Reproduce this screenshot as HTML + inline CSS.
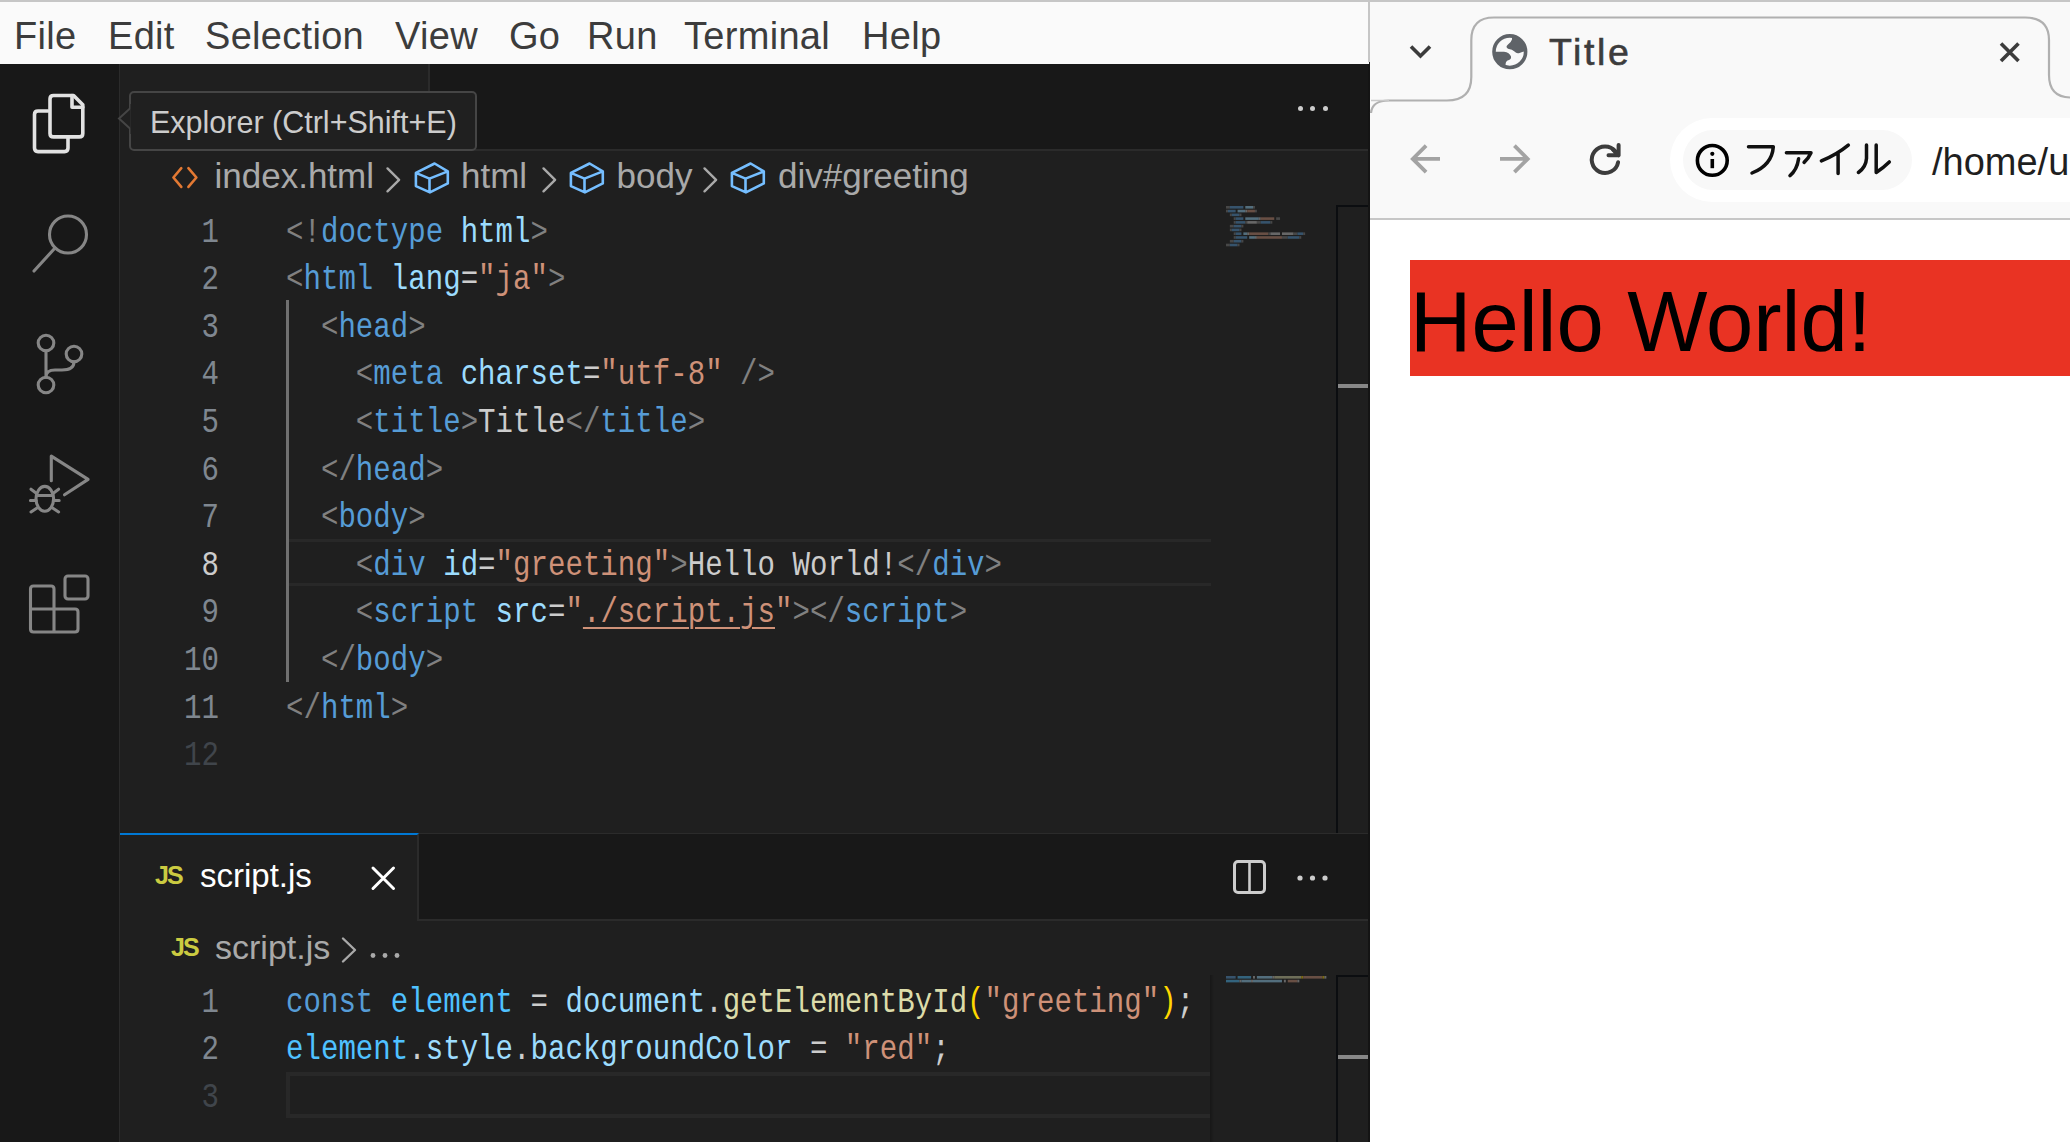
<!DOCTYPE html>
<html><head><meta charset="utf-8">
<style>
*{box-sizing:border-box}
html,body{margin:0;padding:0}
body{width:2070px;height:1142px;overflow:hidden;position:relative;background:#1f1f1f;font-family:"Liberation Sans",sans-serif}
.abs{position:absolute}
#menubar{left:0;top:0;width:1369px;height:64px;background:#fafafa;border-top:2px solid #c9c9c9}
#menubar span{position:absolute;top:14px;letter-spacing:0.3px;font-size:38px;line-height:40px;color:#3c3c3c;white-space:pre}
#activity{left:0;top:64px;width:119px;height:1078px;background:#181818}
#actborder{left:119px;top:64px;width:1px;height:1078px;background:#2b2b2b}
#g1tabs{left:120px;top:64px;width:1249px;height:87px;background:#181818;border-bottom:2px solid #2b2b2b}
#g1tab{left:120px;top:64px;width:310px;height:87px;background:#1f1f1f;border-right:2px solid #2b2b2b}
.code{position:absolute;font-family:"Liberation Mono",monospace;font-size:35px;line-height:47.6px;white-space:pre;transform-origin:0 0;transform:scaleX(0.8314)}
.ln{position:absolute;font-family:"Liberation Mono",monospace;font-size:35px;line-height:47.6px;white-space:pre;text-align:right;width:120px;color:#7f8790;transform-origin:100% 0;transform:scaleX(0.8314)}
.crumb{position:absolute;font-size:35px;line-height:40px;color:#a9a9a9;white-space:pre}
.t{color:#808080}.tn{color:#569cd6}.an{color:#9cdcfe}.s{color:#ce9178}.tx{color:#cccccc}
.kw{color:#569cd6}.vc{color:#4fc1ff}.v{color:#9cdcfe}.fn{color:#dcdcaa}.br{color:#ffd700}.p{color:#cccccc}
#browser{left:1370px;top:0;width:700px;height:1142px;background:#ffffff}
</style></head>
<body>
<!-- menubar -->
<div id="menubar" class="abs">
  <span style="left:14px">File</span>
  <span style="left:108px">Edit</span>
  <span style="left:205px">Selection</span>
  <span style="left:395px">View</span>
  <span style="left:509px">Go</span>
  <span style="left:587px">Run</span>
  <span style="left:684px">Terminal</span>
  <span style="left:862px">Help</span>
</div>

<!-- activity bar -->
<div id="activity" class="abs"></div>
<div id="actborder" class="abs"></div>


<!-- activity icons -->
<svg class="abs" style="left:0;top:0" width="120" height="700">
 <g fill="none" stroke="#e2e2e2" stroke-width="3.6" stroke-linejoin="round" stroke-linecap="round">
  <path d="M48 111 H38 Q34.5 111 34.5 114.5 V148 Q34.5 151.6 38 151.6 H64.5 Q68 151.6 68 148 V137"/>
  <path d="M53.5 95.5 H73.6 L82.8 104.7 V133.4 Q82.8 136.9 79.3 136.9 H53.5 Q50 136.9 50 133.4 V99 Q50 95.5 53.5 95.5 Z"/>
  <path d="M72 95.5 V107.3 H82.8"/>
 </g>
 <g fill="none" stroke="#868686" stroke-width="3.1" stroke-linecap="round" stroke-linejoin="round">
  <circle cx="68" cy="234.5" r="18.5"/>
  <path d="M55 248 L34 271"/>
  <circle cx="46" cy="343" r="7.8"/>
  <circle cx="74" cy="354" r="7.8"/>
  <circle cx="46" cy="385" r="7.8"/>
  <path d="M46 350.8 V377.2 M74 361.8 Q74 370 62 370 H55 Q46 370 46 377"/>
  <path d="M51.3 480.7 V456.1 L88.1 479.4 L64.5 494.8"/>
  <ellipse cx="44.8" cy="498.8" rx="8.8" ry="12.4"/>
  <path d="M37.5 495.4 H52 M36 493 L31 489.2 M53.6 493 L58.6 489.2 M36 500.6 H30.4 M53.6 500.6 H59.2 M37 508 L31 512 M52.6 508 L58.6 512" stroke-width="3"/>
  <path d="M33.5 586 H51 Q54 586 54 589 V609 H75 Q78 609 78 612 V629 Q78 632 75 632 H33.5 Q30.5 632 30.5 629 V589 Q30.5 586 33.5 586 Z M30.5 609 H54 V632"/>
  <rect x="65" y="576" width="23" height="23" rx="3"/>
 </g>
</svg>

<!-- group 1 -->
<div id="g1tabs" class="abs"></div>
<div id="g1tab" class="abs"></div>


<!-- g1 breadcrumbs -->
<svg class="abs" style="left:0;top:0" width="1369" height="210">
 <g fill="none" stroke="#e37933" stroke-width="2.6" stroke-linecap="round" stroke-linejoin="round">
  <path d="M181.3 168.2 L173.4 177.5 L181.3 186.9 M188.4 168.2 L196.4 177.5 L188.4 186.9"/>
 </g>
 <g fill="none" stroke="#a9a9a9" stroke-width="2.4" stroke-linecap="round" stroke-linejoin="round">
  <path d="M387.5 168.4 L399.1 179.8 L387.5 191.3"/>
  <path d="M543.5 168.4 L555.1 179.8 L543.5 191.3"/>
  <path d="M704.5 168.4 L716.1 179.8 L704.5 191.3"/>
 </g>
 <g id="cube" fill="none" stroke="#75beff" stroke-width="2.6" stroke-linejoin="round">
  <path d="M434.6 163.5 L447.8 171.4 L429.5 178.6 L415.9 172.9 Z M415.9 172.9 V186.1 L429.9 192.4 L447.8 183.4 V171.4 M429.5 178.6 V192.4"/>
 </g>
 <use href="#cube" x="155"/>
 <use href="#cube" x="316"/>
</svg>
<span class="crumb" style="left:214.5px;top:155.5px">index.html</span>
<span class="crumb" style="left:461px;top:155.5px">html</span>
<span class="crumb" style="left:616.5px;top:155.5px">body</span>
<span class="crumb" style="left:778px;top:155.5px">div#greeting</span>

<!-- g1 code -->
<div class="abs" style="left:289px;top:538.5px;width:922px;height:47.5px;border-top:3.5px solid #282828;border-bottom:3.5px solid #282828"></div>
<div class="abs" style="left:286px;top:300px;width:3px;height:382px;background:#707070"></div>
<div id="g1lines">
<div class="ln" style="left:99px;top:209.50px">1</div>
<div class="ln" style="left:99px;top:257.10px">2</div>
<div class="ln" style="left:99px;top:304.70px">3</div>
<div class="ln" style="left:99px;top:352.30px">4</div>
<div class="ln" style="left:99px;top:399.90px">5</div>
<div class="ln" style="left:99px;top:447.50px">6</div>
<div class="ln" style="left:99px;top:495.10px">7</div>
<div class="ln" style="left:99px;top:542.70px;color:#cccccc">8</div>
<div class="ln" style="left:99px;top:590.30px">9</div>
<div class="ln" style="left:99px;top:637.90px">10</div>
<div class="ln" style="left:99px;top:685.50px">11</div>
<div class="ln" style="left:99px;top:733.10px;color:#40454b">12</div>
</div>
<div class="code" style="left:286px;top:209.50px"><span class="t">&lt;!</span><span class="tn">doctype</span> <span class="an">html</span><span class="t">&gt;</span></div>
<div class="code" style="left:286px;top:257.10px"><span class="t">&lt;</span><span class="tn">html</span> <span class="an">lang</span><span class="tx">=</span><span class="s">"ja"</span><span class="t">&gt;</span></div>
<div class="code" style="left:286px;top:304.70px">  <span class="t">&lt;</span><span class="tn">head</span><span class="t">&gt;</span></div>
<div class="code" style="left:286px;top:352.30px">    <span class="t">&lt;</span><span class="tn">meta</span> <span class="an">charset</span><span class="tx">=</span><span class="s">"utf-8"</span> <span class="t">/&gt;</span></div>
<div class="code" style="left:286px;top:399.90px">    <span class="t">&lt;</span><span class="tn">title</span><span class="t">&gt;</span><span class="tx">Title</span><span class="t">&lt;/</span><span class="tn">title</span><span class="t">&gt;</span></div>
<div class="code" style="left:286px;top:447.50px">  <span class="t">&lt;/</span><span class="tn">head</span><span class="t">&gt;</span></div>
<div class="code" style="left:286px;top:495.10px">  <span class="t">&lt;</span><span class="tn">body</span><span class="t">&gt;</span></div>
<div class="code" style="left:286px;top:542.70px">    <span class="t">&lt;</span><span class="tn">div</span> <span class="an">id</span><span class="tx">=</span><span class="s">"greeting"</span><span class="t">&gt;</span><span class="tx">Hello World!</span><span class="t">&lt;/</span><span class="tn">div</span><span class="t">&gt;</span></div>
<div class="code" style="left:286px;top:590.30px">    <span class="t">&lt;</span><span class="tn">script</span> <span class="an">src</span><span class="tx">=</span><span class="s">"<u style="text-decoration-thickness:2px;text-underline-offset:5px">./script.js</u>"</span><span class="t">&gt;&lt;/</span><span class="tn">script</span><span class="t">&gt;</span></div>
<div class="code" style="left:286px;top:637.90px">  <span class="t">&lt;/</span><span class="tn">body</span><span class="t">&gt;</span></div>
<div class="code" style="left:286px;top:685.50px"><span class="t">&lt;/</span><span class="tn">html</span><span class="t">&gt;</span></div>

<!-- g1 tab bar actions -->
<div class="abs" style="left:1297.5px;top:105.5px;width:5px;height:5px;border-radius:50%;background:#cccccc"></div>
<div class="abs" style="left:1310px;top:105.5px;width:5px;height:5px;border-radius:50%;background:#cccccc"></div>
<div class="abs" style="left:1322.5px;top:105.5px;width:5px;height:5px;border-radius:50%;background:#cccccc"></div>

<!-- g1 scrollbar -->
<div class="abs" style="left:1336px;top:205px;width:2px;height:628px;background:#0b0d10"></div>
<div class="abs" style="left:1336px;top:205px;width:33px;height:2px;background:#0b0d10"></div>
<div class="abs" style="left:1338px;top:384px;width:30px;height:4px;background:#888888"></div>


<!-- group 2 -->
<div class="abs" style="left:120px;top:832.5px;width:1249px;height:2px;background:#2b2b2b"></div>
<div class="abs" style="left:120px;top:834px;width:1249px;height:87px;background:#181818;border-bottom:2px solid #2b2b2b"></div>
<div class="abs" style="left:120px;top:833.3px;width:299px;height:87.7px;background:#1f1f1f;border-right:2px solid #2b2b2b;border-top:2.7px solid #0078d4"></div>
<div class="abs" style="left:120px;top:921px;width:1249px;height:221px;background:#1f1f1f"></div>
<span class="abs" style="left:155px;top:858px;font-size:25px;line-height:34px;font-weight:700;color:#cbcb41;letter-spacing:-2px">JS</span>
<span class="abs" style="left:200px;top:856px;font-size:33px;line-height:40px;color:#ffffff;white-space:pre">script.js</span>
<svg class="abs" style="left:360px;top:856px" width="46" height="44"><path d="M13 12 L33.5 32.5 M33.5 12 L13 32.5" stroke="#ffffff" stroke-width="3" stroke-linecap="round"/></svg>
<svg class="abs" style="left:1220px;top:850px" width="120" height="56">
 <rect x="14.5" y="11.5" width="30" height="31" rx="3.5" fill="none" stroke="#cccccc" stroke-width="3"/>
 <path d="M29.5 11.5 V42.5" stroke="#cccccc" stroke-width="2.6"/>
 <circle cx="80" cy="28" r="2.6" fill="#cccccc"/><circle cx="92.5" cy="28" r="2.6" fill="#cccccc"/><circle cx="105" cy="28" r="2.6" fill="#cccccc"/>
</svg>
<span class="abs" style="left:171px;top:930px;font-size:25px;line-height:34px;font-weight:700;color:#cbcb41;letter-spacing:-2px">JS</span>
<span class="crumb" style="left:215px;top:927px;font-size:34px">script.js</span>
<svg class="abs" style="left:330px;top:925px" width="80" height="45">
 <path d="M13 13.5 L25 25 L13 36.5" fill="none" stroke="#a9a9a9" stroke-width="2.4" stroke-linecap="round" stroke-linejoin="round"/>
 <circle cx="43" cy="30.5" r="2.4" fill="#a9a9a9"/><circle cx="55" cy="30.5" r="2.4" fill="#a9a9a9"/><circle cx="67" cy="30.5" r="2.4" fill="#a9a9a9"/>
</svg>
<div class="abs" style="left:286px;top:1072px;width:925px;height:46px;border:4px solid #282828;border-right:none"></div>
<div class="ln" style="left:99px;top:979.50px">1</div>
<div class="ln" style="left:99px;top:1027.10px">2</div>
<div class="ln" style="left:99px;top:1074.70px;color:#40454b">3</div>
<div class="code" style="left:286px;top:979.50px"><span class="kw">const</span> <span class="vc">element</span> <span class="p">=</span> <span class="v">document</span><span class="p">.</span><span class="fn">getElementById</span><span class="br">(</span><span class="s">"greeting"</span><span class="br">)</span><span class="p">;</span></div>
<div class="code" style="left:286px;top:1027.10px"><span class="vc">element</span><span class="p">.</span><span class="v">style</span><span class="p">.</span><span class="v">backgroundColor</span> <span class="p">=</span> <span class="s">"red"</span><span class="p">;</span></div>
<div class="abs" style="left:1210px;top:975px;width:4px;height:167px;background:linear-gradient(to right,#171717,#1f1f1f)"></div>
<div class="abs" style="left:1336px;top:975px;width:2px;height:167px;background:#0b0d10"></div>
<div class="abs" style="left:1336px;top:975px;width:33px;height:2px;background:#0b0d10"></div>
<div class="abs" style="left:1338px;top:1055px;width:30px;height:4px;background:#888888"></div>

<!-- minimap --><svg class="abs" style="left:0;top:0;opacity:0.42" width="1369" height="1142"><rect x="1226.00" y="206.00" width="3.86" height="2.6" fill="#808080"/><rect x="1229.86" y="206.00" width="13.51" height="2.6" fill="#569cd6"/><rect x="1245.30" y="206.00" width="7.72" height="2.6" fill="#9cdcfe"/><rect x="1253.02" y="206.00" width="1.93" height="2.6" fill="#808080"/><rect x="1226.00" y="209.77" width="1.93" height="2.6" fill="#808080"/><rect x="1227.93" y="209.77" width="7.72" height="2.6" fill="#569cd6"/><rect x="1237.58" y="209.77" width="7.72" height="2.6" fill="#9cdcfe"/><rect x="1245.30" y="209.77" width="1.93" height="2.6" fill="#cccccc"/><rect x="1247.23" y="209.77" width="7.72" height="2.6" fill="#ce9178"/><rect x="1254.95" y="209.77" width="1.93" height="2.6" fill="#808080"/><rect x="1229.86" y="213.54" width="1.93" height="2.6" fill="#808080"/><rect x="1231.79" y="213.54" width="7.72" height="2.6" fill="#569cd6"/><rect x="1239.51" y="213.54" width="1.93" height="2.6" fill="#808080"/><rect x="1233.72" y="217.31" width="1.93" height="2.6" fill="#808080"/><rect x="1235.65" y="217.31" width="7.72" height="2.6" fill="#569cd6"/><rect x="1245.30" y="217.31" width="13.51" height="2.6" fill="#9cdcfe"/><rect x="1258.81" y="217.31" width="1.93" height="2.6" fill="#cccccc"/><rect x="1260.74" y="217.31" width="13.51" height="2.6" fill="#ce9178"/><rect x="1276.18" y="217.31" width="3.86" height="2.6" fill="#808080"/><rect x="1233.72" y="221.08" width="1.93" height="2.6" fill="#808080"/><rect x="1235.65" y="221.08" width="9.65" height="2.6" fill="#569cd6"/><rect x="1245.30" y="221.08" width="1.93" height="2.6" fill="#808080"/><rect x="1247.23" y="221.08" width="9.65" height="2.6" fill="#cccccc"/><rect x="1256.88" y="221.08" width="3.86" height="2.6" fill="#808080"/><rect x="1260.74" y="221.08" width="9.65" height="2.6" fill="#569cd6"/><rect x="1270.39" y="221.08" width="1.93" height="2.6" fill="#808080"/><rect x="1229.86" y="224.85" width="3.86" height="2.6" fill="#808080"/><rect x="1233.72" y="224.85" width="7.72" height="2.6" fill="#569cd6"/><rect x="1241.44" y="224.85" width="1.93" height="2.6" fill="#808080"/><rect x="1229.86" y="228.62" width="1.93" height="2.6" fill="#808080"/><rect x="1231.79" y="228.62" width="7.72" height="2.6" fill="#569cd6"/><rect x="1239.51" y="228.62" width="1.93" height="2.6" fill="#808080"/><rect x="1233.72" y="232.39" width="1.93" height="2.6" fill="#808080"/><rect x="1235.65" y="232.39" width="5.79" height="2.6" fill="#569cd6"/><rect x="1243.37" y="232.39" width="3.86" height="2.6" fill="#9cdcfe"/><rect x="1247.23" y="232.39" width="1.93" height="2.6" fill="#cccccc"/><rect x="1249.16" y="232.39" width="19.30" height="2.6" fill="#ce9178"/><rect x="1268.46" y="232.39" width="1.93" height="2.6" fill="#808080"/><rect x="1270.39" y="232.39" width="9.65" height="2.6" fill="#cccccc"/><rect x="1281.97" y="232.39" width="11.58" height="2.6" fill="#cccccc"/><rect x="1293.55" y="232.39" width="3.86" height="2.6" fill="#808080"/><rect x="1297.41" y="232.39" width="5.79" height="2.6" fill="#569cd6"/><rect x="1303.20" y="232.39" width="1.93" height="2.6" fill="#808080"/><rect x="1233.72" y="236.16" width="1.93" height="2.6" fill="#808080"/><rect x="1235.65" y="236.16" width="11.58" height="2.6" fill="#569cd6"/><rect x="1249.16" y="236.16" width="5.79" height="2.6" fill="#9cdcfe"/><rect x="1254.95" y="236.16" width="1.93" height="2.6" fill="#cccccc"/><rect x="1256.88" y="236.16" width="25.09" height="2.6" fill="#ce9178"/><rect x="1281.97" y="236.16" width="5.79" height="2.6" fill="#808080"/><rect x="1287.76" y="236.16" width="11.58" height="2.6" fill="#569cd6"/><rect x="1299.34" y="236.16" width="1.93" height="2.6" fill="#808080"/><rect x="1229.86" y="239.93" width="3.86" height="2.6" fill="#808080"/><rect x="1233.72" y="239.93" width="7.72" height="2.6" fill="#569cd6"/><rect x="1241.44" y="239.93" width="1.93" height="2.6" fill="#808080"/><rect x="1226.00" y="243.70" width="3.86" height="2.6" fill="#808080"/><rect x="1229.86" y="243.70" width="7.72" height="2.6" fill="#569cd6"/><rect x="1237.58" y="243.70" width="1.93" height="2.6" fill="#808080"/><rect x="1226.00" y="976.00" width="9.65" height="2.6" fill="#569cd6"/><rect x="1237.58" y="976.00" width="13.51" height="2.6" fill="#4fc1ff"/><rect x="1253.02" y="976.00" width="1.93" height="2.6" fill="#cccccc"/><rect x="1256.88" y="976.00" width="15.44" height="2.6" fill="#9cdcfe"/><rect x="1272.32" y="976.00" width="1.93" height="2.6" fill="#cccccc"/><rect x="1274.25" y="976.00" width="27.02" height="2.6" fill="#dcdcaa"/><rect x="1301.27" y="976.00" width="1.93" height="2.6" fill="#ffd700"/><rect x="1303.20" y="976.00" width="19.30" height="2.6" fill="#ce9178"/><rect x="1322.50" y="976.00" width="1.93" height="2.6" fill="#ffd700"/><rect x="1324.43" y="976.00" width="1.93" height="2.6" fill="#cccccc"/><rect x="1226.00" y="979.77" width="13.51" height="2.6" fill="#4fc1ff"/><rect x="1239.51" y="979.77" width="1.93" height="2.6" fill="#cccccc"/><rect x="1241.44" y="979.77" width="9.65" height="2.6" fill="#9cdcfe"/><rect x="1251.09" y="979.77" width="1.93" height="2.6" fill="#cccccc"/><rect x="1253.02" y="979.77" width="28.95" height="2.6" fill="#9cdcfe"/><rect x="1283.90" y="979.77" width="1.93" height="2.6" fill="#cccccc"/><rect x="1287.76" y="979.77" width="9.65" height="2.6" fill="#ce9178"/><rect x="1297.41" y="979.77" width="1.93" height="2.6" fill="#cccccc"/></svg><!-- /minimap -->
<!-- tooltip -->
<div class="abs" style="left:129px;top:91px;width:348px;height:60px;background:#202020;border:2px solid #454545;border-radius:5px"></div>
<svg class="abs" style="left:112px;top:100px" width="22" height="40"><path d="M18.5 8 L7 18.5 L18.5 29" fill="#202020" stroke="#454545" stroke-width="2"/><rect x="18.5" y="4" width="4" height="30" fill="#202020"/></svg>
<span class="abs" style="left:150px;top:102px;font-size:30.5px;line-height:40px;color:#cccccc;white-space:pre">Explorer (Ctrl+Shift+E)</span>


<div id="browser" class="abs"></div>
<!-- browser chrome -->
<div class="abs" style="left:1370px;top:0;width:700px;height:219px;background:#f9f9f9"></div>
<div class="abs" style="left:0;top:0;width:2070px;height:2px;background:#c6c6c6"></div>
<div class="abs" style="left:1368px;top:0;width:2px;height:62px;background:#c6c6c6"></div><div class="abs" style="left:1368px;top:64px;width:2px;height:1078px;background:#141414"></div>
<svg class="abs" style="left:1369px;top:0" width="701" height="230">
 <path d="M2 113 Q3 100.5 20 100.5 H78 Q102.3 100.5 102.3 77 V40 Q102.3 17.5 125 17.5 H656 Q680 17.5 680 40 V75 Q680 97.5 702 97.5" fill="none" stroke="#b0b0b0" stroke-width="2.2"/>
 <path d="M42 46.5 L51.5 56 L61 46.5" fill="none" stroke="#3c3c3c" stroke-width="3.6"/>
 <g transform="translate(1115,25)"></g>
 <path d="M632 43.5 L649.5 61 M649.5 43.5 L632 61" stroke="#3c3c3c" stroke-width="3.6"/>
 <g fill="none" stroke="#a3a3a3" stroke-width="3.8">
  <path d="M57.1 145.6 L43.8 158.9 L57.1 172.2 M44 158.9 H71"/>
  <path d="M145.4 145.6 L158.7 158.9 L145.4 172.2 M158.5 158.9 H131"/>
 </g>
 <g fill="none" stroke="#3c3c3c" stroke-width="3.8">
  <path d="M249.1 162.3 A13.3 13.3 0 1 1 246.5 151.5" stroke-linecap="round" stroke-width="4"/>
  <path d="M239.5 155.3 H249.6 V145 M249.6 155.3 L244 149.5" stroke-width="4" stroke-linejoin="round" stroke-linecap="round"/>
 </g>
 <path d="M1 219 H701" stroke="#c7c7c7" stroke-width="2"/><path d="M2 100.5 H20" stroke="#c9c9c9" stroke-width="1.5"/>
</svg>
<svg class="abs" style="left:1485px;top:25px" width="55" height="55">
 <defs><clipPath id="gc"><circle cx="24.8" cy="26.7" r="16"/></clipPath></defs>
 <circle cx="24.8" cy="26.7" r="15.8" fill="none" stroke="#5f6368" stroke-width="3.6"/>
 <g clip-path="url(#gc)" fill="#5f6368">
  <path d="M27 5 L27 14.5 Q26 17.5 23 19.5 Q20 22 23 23.8 Q27.5 24.3 29.5 26.5 Q31.5 29 34.5 28 Q37.5 27 45 25 L45 5 Z"/>
  <path d="M4 26.8 L19 26.8 Q24.5 27.5 26 31.5 Q26.5 34.5 22.5 35.5 Q20.5 36.5 20.5 39.5 L20.5 48 L4 48 Z"/>
 </g>
</svg>
<span class="abs" style="left:1549px;top:30.5px;font-size:37.5px;line-height:42px;font-weight:400;letter-spacing:2.6px;-webkit-text-stroke:0.6px #3c3c3c;color:#3c3c3c;white-space:pre">Title</span>
<div class="abs" style="left:1670px;top:118px;width:500px;height:84px;border-radius:42px;background:#ffffff"></div>
<div class="abs" style="left:1683px;top:130px;width:229px;height:60px;border-radius:30px;background:#f8f8f8"></div>
<svg class="abs" style="left:1690px;top:135px" width="220" height="50">
 <circle cx="22.3" cy="25.4" r="14.9" fill="none" stroke="#000" stroke-width="3.6"/>
 <circle cx="22.3" cy="18.8" r="2.1" fill="#000"/>
 <path d="M22.3 24 V33.2" stroke="#000" stroke-width="3.6"/>
 <g fill="none" stroke="#111" stroke-width="3.5" stroke-linecap="round" stroke-linejoin="round">
  <path d="M58.5 11.8 H83.3 Q82 30 62 38"/>
  <path d="M96.4 17.8 H121 Q118.5 23.5 114.1 27.4 M108.6 23.8 Q107 35 100 40.6"/>
  <path d="M158.3 10.1 Q147 19.5 131.4 25.9 M148.1 18.8 V38.6"/>
  <path d="M176.5 10.1 V23.3 Q176 32 168.4 37.5 M186.2 10.1 V37.5 Q193 33 199.3 26.9"/>
 </g>
</svg>
<span class="abs" style="left:1932px;top:140.5px;font-size:38px;line-height:42px;color:#1f1f1f;white-space:pre">/home/u</span>
<!-- page -->
<div class="abs" style="left:1410px;top:260px;width:660px;height:116px;background:#e93323"></div>
<span class="abs" style="left:1410px;top:272px;font-size:85px;line-height:100px;color:#000;white-space:pre">Hello World!</span>

</body></html>
